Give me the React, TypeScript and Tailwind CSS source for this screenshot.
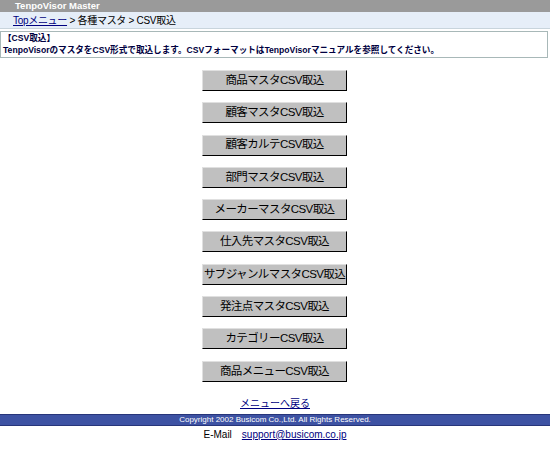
const BUTTONS = [
  '商品マスタCSV取込',
  '顧客マスタCSV取込',
  '顧客カルテCSV取込',
  '部門マスタCSV取込',
  'メーカーマスタCSV取込',
  '仕入先マスタCSV取込',
  'サブジャンルマスタCSV取込',
  '発注点マスタCSV取込',
  'カテゴリーCSV取込',
  '商品メニューCSV取込',
];

export default function App() {
  return (
    <div className="w-[550px] h-[451px] bg-white text-black font-['Liberation_Sans','Noto_Sans_CJK_JP',sans-serif] overflow-hidden">
      <div className="h-[12px] bg-[#9a9a9a] pl-[15px] text-[9.5px] font-bold leading-[12px] text-white">
        TenpoVisor Master
      </div>
      <div className="h-[17px] bg-[#e6eef8] border-b border-[#c8d4dc] pl-[13px] text-[10px] tracking-[-0.3px] leading-[17px]">
        <a className="text-[#000080] underline">Topメニュー</a>
        <span> &gt; 各種マスタ &gt; CSV取込</span>
      </div>
      <div className="mt-[2px] mr-[2px] h-[27px] border border-[#a8b8b8] pl-[2px] text-[8.6px] font-bold leading-[12px] text-[#000040]">
        <div>【CSV取込】</div>
        <div className="whitespace-nowrap">TenpoVisorのマスタをCSV形式で取込します。CSVフォーマットはTenpoVisorマニュアルを参照してください。</div>
      </div>
      <div className="mt-[12px] flex flex-col items-center gap-[11.3px]">
        {BUTTONS.map((b) => (
          <button
            key={b}
            className="w-[145px] h-[21px] px-0 flex items-center justify-center overflow-hidden whitespace-nowrap bg-[#c0c0c0] border border-t-[#e0e0e0] border-l-[#e0e0e0] border-b-black border-r-black text-[11.5px] tracking-[-0.6px] text-black ml-[-1px]"
          >
            {b}
          </button>
        ))}
      </div>
      <div className="mt-[16px] text-center text-[10px] leading-[12px]">
        <a className="text-[#000080] underline">メニューへ戻る</a>
      </div>
      <div className="mt-[4px] h-[12px] bg-[#3d52a3] border-y border-[#27357a] text-center text-[8px] leading-[10px] text-white">
        Copyright 2002 Busicom Co.,Ltd. All Rights Reserved.
      </div>
      <div className="mt-[3px] text-center text-[10px] leading-[12px]">
        <span className="mr-[10px]">E-Mail</span>
        <a className="text-[#000080] underline">support@busicom.co.jp</a>
      </div>
    </div>
  );
}
